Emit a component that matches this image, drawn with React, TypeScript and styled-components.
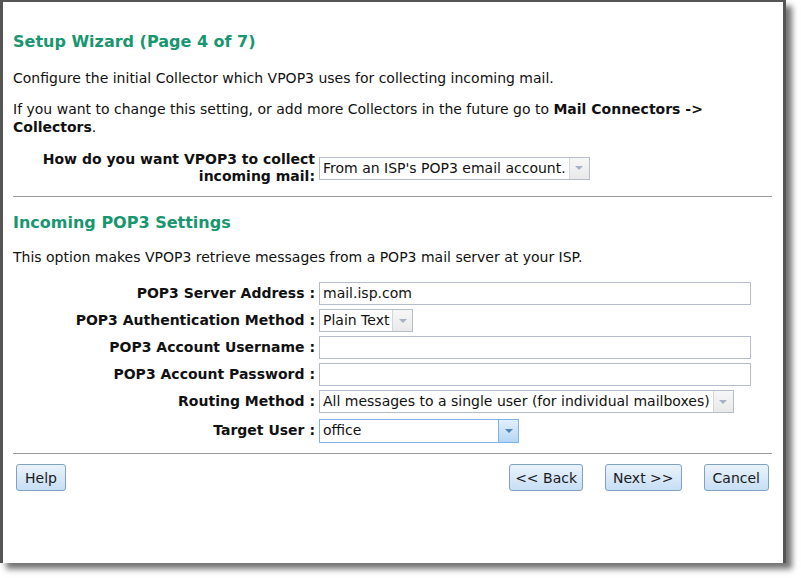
import React from 'react';
import styled, { createGlobalStyle } from 'styled-components';

const GlobalStyle = createGlobalStyle`
  body {
    margin: 0;
    background: #fff;
    font-family: "DejaVu Sans", Verdana, sans-serif;
    font-size: 14px;
    color: #111;
  }
`;

const Page = styled.div`
  padding-bottom: 15px;
`;

const Window = styled.div`
  box-sizing: border-box;
  width: 786px;
  height: 563px;
  border: 3px solid #555;
  border-bottom: none;
  border-top-width: 2px;
  background: #fff;
  box-shadow: 6px 6px 6px rgba(0, 0, 0, 0.55);
  padding: 30px 11px 0 10px;
`;

const Heading = styled.h2<{ top?: number }>`
  margin: ${({ top }) => top ?? 0}px 0 0;
  font-size: 16px;
  line-height: 20px;
  font-weight: bold;
  color: #17966f;
`;

const Para = styled.p<{ top?: number }>`
  margin: ${({ top }) => top ?? 13}px 0 0;
  line-height: 18px;
`;

const Form = styled.div<{ top: number }>`
  display: grid;
  grid-template-columns: 302px 1fr;
  column-gap: 4px;
  row-gap: 4px;
  align-items: center;
  margin-top: ${({ top }) => top}px;
`;

const Label = styled.label`
  text-align: right;
  font-weight: bold;
  line-height: 17px;
`;

const Field = styled.div<{ top?: number }>`
  margin-top: ${({ top }) => top ?? 0}px;
`;

const TextBox = styled.div`
  box-sizing: border-box;
  width: 432px;
  height: 23px;
  border: 1px solid #b5bccb;
  padding: 0 3px;
  line-height: 21px;
  background: #fff;
`;

const SelectBox = styled.div<{ $focused?: boolean }>`
  box-sizing: border-box;
  display: inline-flex;
  align-items: stretch;
  height: ${({ $focused }) => ($focused ? 24 : 23)}px;
  border: 1px solid ${({ $focused }) => ($focused ? '#7db3ea' : '#b5bccb')};
  background: #fff;
  width: max-content;
`;

const SelectText = styled.span`
  padding: 0 3px;
  line-height: 21px;
  white-space: nowrap;
  flex: 1;
`;

const Arrow = styled.span<{ $focused?: boolean }>`
  width: 19px;
  display: flex;
  align-items: center;
  justify-content: center;
  border-left: 1px solid ${({ $focused }) => ($focused ? '#7db3ea' : '#d2d6de')};
  background: ${({ $focused }) =>
    $focused
      ? 'linear-gradient(#e2effc, #b5d6f6)'
      : 'linear-gradient(#f7f7f7, #e9e9e9)'};

  &::after {
    content: '';
    border-left: 4px solid transparent;
    border-right: 4px solid transparent;
    border-top: 4px solid ${({ $focused }) => ($focused ? '#4f82b8' : '#a6b2c4')};
  }
`;

const Rule = styled.hr<{ top: number }>`
  margin: ${({ top }) => top}px 0 0;
  border: none;
  border-top: 1px solid #9c9c9c;
  height: 0;
`;

const ButtonBar = styled.div`
  display: flex;
  align-items: center;
  gap: 22px;
  padding: 0 3px;
  margin-top: 10px;
`;

const Spacer = styled.div`
  flex: 1;
`;

const Button = styled.button<{ $pad?: number }>`
  box-sizing: border-box;
  height: 27px;
  padding: 0 ${({ $pad }) => $pad ?? 8}px;
  font-family: "DejaVu Sans", Verdana, sans-serif;
  font-size: 14px;
  color: #1a1a1a;
  border: 1px solid #7fa2c4;
  border-radius: 3px;
  background: linear-gradient(#eaf3fc, #c7def4);
`;

const Select = ({ value, focused, width }: { value: string; focused?: boolean; width?: number }) => (
  <SelectBox $focused={focused} style={width ? { width } : undefined}>
    <SelectText>{value}</SelectText>
    <Arrow $focused={focused} />
  </SelectBox>
);

export default function App() {
  return (
    <Page>
      <GlobalStyle />
      <Window>
        <Heading>Setup Wizard (Page 4 of 7)</Heading>
        <Para top={17}>
          Configure the initial Collector which VPOP3 uses for collecting incoming mail.
        </Para>
        <Para>
          If you want to change this setting, or add more Collectors in the future go to{' '}
          <b>Mail Connectors -&gt; Collectors</b>.
        </Para>

        <Form top={15}>
          <Label>How do you want VPOP3 to collect incoming mail:</Label>
          <Field>
            <Select value="From an ISP's POP3 email account." />
          </Field>
        </Form>

        <Rule top={11} />

        <Heading top={16}>Incoming POP3 Settings</Heading>
        <Para top={15}>
          This option makes VPOP3 retrieve messages from a POP3 mail server at your ISP.
        </Para>

        <Form top={16}>
          <Label>POP3 Server Address :</Label>
          <TextBox>mail.isp.com</TextBox>
          <Label>POP3 Authentication Method :</Label>
          <Field>
            <Select value="Plain Text" />
          </Field>
          <Label>POP3 Account Username :</Label>
          <TextBox />
          <Label>POP3 Account Password :</Label>
          <TextBox />
          <Label>Routing Method :</Label>
          <Field>
            <Select value="All messages to a single user (for individual mailboxes)" />
          </Field>
          <Label>Target User :</Label>
          <Field top={2}>
            <Select value="office" focused width={200} />
          </Field>
        </Form>

        <Rule top={10} />

        <ButtonBar>
          <Button>Help</Button>
          <Spacer />
          <Button $pad={5}>&lt;&lt; Back</Button>
          <Button $pad={7}>Next &gt;&gt;</Button>
          <Button>Cancel</Button>
        </ButtonBar>
      </Window>
    </Page>
  );
}
